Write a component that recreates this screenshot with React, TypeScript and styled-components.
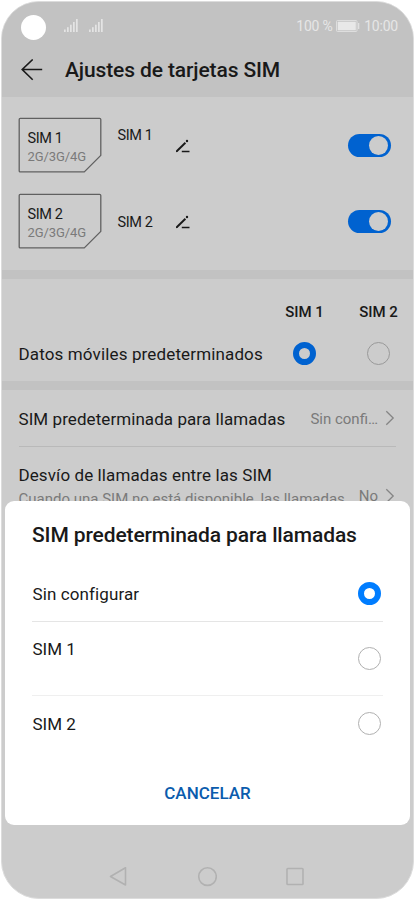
import React from "react";
import styled, { createGlobalStyle } from "styled-components";

const GlobalStyle = createGlobalStyle`
  * { box-sizing: border-box; }
  body { margin: 0; background: #fff; font-family: Roboto, "Liberation Sans", sans-serif; }
  svg { display: block; flex: none; }
`;

const Phone = styled.div`
  position: relative;
  width: 413px;
  height: 898px;
  margin: 1px 1px 0;
  border: 1px solid #dcdcdc;
  border-radius: 38px;
  background: #ccc;
  overflow: hidden;
  color: #191919;
  display: flex;
  flex-direction: column;
`;

const Top = styled.header`
  height: 95px;
  flex: none;
  background: #c2c2c2;
`;

const StatusBar = styled.div`
  height: 48px;
  padding: 0 15px 0 18.5px;
  display: flex;
  align-items: center;
  color: #e6e6e6;
`;

const Camera = styled.div`
  width: 25px;
  height: 25px;
  margin: 2px 18px 0 0;
  border-radius: 50%;
  background: #fff;
`;

const Signals = styled.div`
  display: flex;
  gap: 11px;
  flex: 1;
  padding-bottom: 2px;
`;

const BatteryStatus = styled.div`
  display: flex;
  align-items: center;
  gap: 4px;
  margin-right: 3.5px;
  & > svg { margin-left: -1px; margin-right: 1px; }
`;

const Label = styled.span<{ $size: number; $weight?: number; $muted?: boolean; $spacing?: number }>`
  font-size: ${(p) => p.$size}px;
  font-weight: ${(p) => p.$weight ?? 400};
  letter-spacing: ${(p) => p.$spacing ?? 0}px;
  line-height: 20px;
  white-space: nowrap;
  ${(p) => p.$muted && "color: #7a7a7a;"}
`;

const TitleBar = styled.div`
  height: 40px;
  padding-left: 19px;
  display: flex;
  align-items: center;
  gap: 22px;
`;

const SimList = styled.section`
  height: 173px;
  flex: none;
  padding: 20px 22.5px 0 16px;
  display: flex;
  flex-direction: column;
`;

const SimRow = styled.div`
  height: 76px;
  display: flex;
  align-items: flex-start;
`;

const SimCard = styled.div`
  display: grid;
  width: 84px;
  height: 56px;
  & > * { grid-area: 1 / 1; }
`;

const CardText = styled.div`
  padding: 13px 0 0 9.5px;
  display: flex;
  flex-direction: column;
  & > span { line-height: 18px; }
`;

const SimName = styled.div<{ $offset: number }>`
  width: 57px;
  margin: ${(p) => p.$offset}px 0 0 15.5px;
  line-height: 0;
`;

const PencilSlot = styled.div`
  padding-top: 22px;
  flex: 1;
`;

const Toggle = styled.div`
  width: 42.5px;
  height: 23.5px;
  margin-top: 16.5px;
  padding: 2px 2.5px 2px 2px;
  border-radius: 12px;
  background: #0062d0;
  display: flex;
  justify-content: flex-end;
  align-items: center;
  &::after {
    content: "";
    width: 19px;
    height: 19px;
    border-radius: 50%;
    background: #ccc;
  }
`;

const Band = styled.div`
  height: 9px;
  flex: none;
  background: #c2c2c2;
`;

const DataSection = styled.section`
  height: 102px;
  flex: none;
  padding: 23px 0 0 16.5px;
  display: grid;
  grid-template-columns: 249px 74px 74px;
  grid-template-rows: 20px 62px;
  align-items: center;
  justify-items: center;
`;

const DataLabel = styled.div`
  justify-self: start;
  padding-top: 2px;
`;

const Radio = styled.div<{ $checked?: boolean; $dim?: boolean }>`
  width: 23px;
  height: 23px;
  flex: none;
  border-radius: 50%;
  border: ${(p) =>
    p.$checked ? `6px solid ${p.$dim ? "#0062d0" : "#007dff"}` : `1px solid ${p.$dim ? "#999" : "#b0b0b0"}`};
`;

const Preference = styled.div`
  height: 57px;
  flex: none;
  margin: 0 17px 0 16.5px;
  padding-top: 1px;
  display: flex;
  align-items: center;
  border-bottom: 1px solid #b9b9b9;
`;

const PreferenceBlock = styled.div`
  height: 100px;
  flex: none;
  margin: 0 17px 0 16.5px;
  padding-top: 18px;
  display: flex;
  align-items: flex-start;
`;

const Stack = styled.div`
  display: flex;
  flex-direction: column;
  gap: 4px;
  flex: 1;
`;

const Grow = styled.div`
  flex: 1;
  display: flex;
`;

const Value = styled.div<{ $drop?: number }>`
  display: flex;
  align-items: center;
  gap: 7px;
  padding: ${(p) => p.$drop ?? 0}px 1px 0 0;
  & > svg { margin-bottom: 1px; }
`;

const Dialog = styled.div`
  position: absolute;
  left: 2.5px;
  right: 3px;
  top: 499px;
  height: 324px;
  padding: 24px 27px 0 27.5px;
  border-radius: 9px;
  background: #fff;
  display: flex;
  flex-direction: column;
`;

const DialogTitle = styled.h2`
  margin: 0;
  height: 43px;
  display: flex;
  align-items: flex-start;
`;

const Option = styled.div<{ $height: number; $line?: string }>`
  height: ${(p) => p.$height}px;
  padding: 0 2.5px 0 0.5px;
  display: flex;
  align-items: flex-start;
  justify-content: space-between;
  border-bottom: 1px solid ${(p) => p.$line ?? "transparent"};
`;

const Drop = styled.div<{ $top: number }>`
  padding-top: ${(p) => p.$top}px;
  display: flex;
`;

const CancelButton = styled.button`
  margin: 21px auto 0;
  padding: 0;
  border: 0;
  background: none;
  color: #0b5cad;
  font-family: inherit;
  height: 20px;
`;

const NavBar = styled.nav`
  margin-top: auto;
  height: 31px;
  flex: none;
  padding: 0 109px 0 107px;
  display: flex;
  justify-content: space-between;
`;

const Signal = () => (
  <svg width="14" height="13" viewBox="0 0 14 13" fill="#e4e4e4">
    <rect x="0" y="10.5" width="1.7" height="2.5" />
    <rect x="3" y="8.2" width="1.7" height="4.8" />
    <rect x="6" y="5.7" width="1.7" height="7.3" />
    <rect x="9" y="3" width="1.7" height="10" />
    <rect x="12" y="0" width="1.7" height="13" />
  </svg>
);

const Battery = () => (
  <svg width="24" height="12" viewBox="0 0 24 12">
    <rect x="0.5" y="0.5" width="20.5" height="11" rx="1" fill="none" stroke="#dedede" />
    <rect x="1.7" y="1.7" width="18.1" height="8.6" fill="#e8e8e8" />
    <rect x="22" y="3" width="1.3" height="6" fill="#e0e0e0" />
  </svg>
);

const BackArrow = () => (
  <svg width="22" height="22" viewBox="0 0 22 22" fill="none" stroke="#191919" strokeWidth="1.6">
    <path d="M11.7 .5 1.2 10.5 11.7 20.7M1.2 10.5H21.2" />
  </svg>
);

const CardOutline = () => (
  <svg width="84" height="56" viewBox="0 0 84 56" fill="none" stroke="#606060" strokeWidth="1.3" strokeLinejoin="round">
    <path d="M2.2 1.4H81.6Q82.8 1.4 82.8 2.6V38.4L66.3 54.9H2.2Q1.2 54.9 1.2 53.9V2.4Q1.2 1.4 2.2 1.4Z" />
  </svg>
);

const Pencil = () => (
  <svg width="16" height="14" viewBox="0 0 16 14" fill="none" stroke="#191919">
    <path d="M1.7 12.3 10.4 3.7" strokeWidth="1.9" />
    <path d="M.9 13.2 1.3 11.3 2.8 12.8Z" fill="#191919" stroke="none" />
    <circle cx="12" cy="2" r="1.2" fill="#191919" stroke="none" />
    <path d="M6.8 12.5H14.5" strokeWidth="1.3" />
  </svg>
);

const Chevron = () => (
  <svg width="10" height="16" viewBox="0 0 10 16" fill="none" stroke="#858585" strokeWidth="1.3">
    <path d="M1.3 1.2 8.2 8 1.3 14.8" />
  </svg>
);

const SimEntry = ({ name, offset }: { name: string; offset: number }) => (
  <SimRow>
    <SimCard>
      <CardOutline />
      <CardText>
        <Label $size={14.5} $spacing={-0.4}>{name}</Label>
        <Label $size={13} $spacing={-0.1} $muted>2G/3G/4G</Label>
      </CardText>
    </SimCard>
    <SimName $offset={offset}><Label $size={14.5} $spacing={-0.4}>{name}</Label></SimName>
    <PencilSlot><Pencil /></PencilSlot>
    <Toggle />
  </SimRow>
);

export default function App() {
  return (
    <>
      <GlobalStyle />
      <Phone>
        <Top>
          <StatusBar>
            <Camera />
            <Signals><Signal /><Signal /></Signals>
            <BatteryStatus>
              <Label $size={14} $spacing={-0.2}>100 %</Label>
              <Battery />
            </BatteryStatus>
            <Label $size={14} $spacing={-0.2}>10:00</Label>
          </StatusBar>
          <TitleBar>
            <BackArrow />
            <Label $size={21} $weight={500} $spacing={-0.12}>Ajustes de tarjetas SIM</Label>
          </TitleBar>
        </Top>
        <SimList>
          <SimEntry name="SIM 1" offset={9} />
          <SimEntry name="SIM 2" offset={20} />
        </SimList>
        <Band />
        <DataSection>
          <span />
          <Label $size={15} $weight={500}>SIM 1</Label>
          <Label $size={15} $weight={500}>SIM 2</Label>
          <DataLabel><Label $size={17} $spacing={0.14}>Datos móviles predeterminados</Label></DataLabel>
          <Radio $checked $dim />
          <Radio $dim />
        </DataSection>
        <Band />
        <Preference>
          <Grow><Label $size={17} $spacing={0.07}>SIM predeterminada para llamadas</Label></Grow>
          <Value><Label $size={15} $muted>Sin confi…</Label><Chevron /></Value>
        </Preference>
        <PreferenceBlock>
          <Stack>
            <Label $size={17} $spacing={0.1}>Desvío de llamadas entre las SIM</Label>
            <Label $size={15} $muted>Cuando una SIM no está disponible, las llamadas</Label>
          </Stack>
          <Value $drop={21}><Label $size={15} $muted>No</Label><Chevron /></Value>
        </PreferenceBlock>
        <NavBar>
          <svg width="18" height="20" viewBox="0 0 18 20" fill="none" stroke="#b1b1b1" strokeWidth="1.6" strokeLinejoin="round">
            <path d="M16.5 .7V18L1.5 9.5Z" />
          </svg>
          <svg width="20" height="20" viewBox="0 0 20 20" fill="none" stroke="#b1b1b1" strokeWidth="1.6">
            <circle cx="10.5" cy="9.6" r="8.8" />
          </svg>
          <svg width="18" height="20" viewBox="0 0 18 20" fill="none" stroke="#b1b1b1" strokeWidth="1.6">
            <rect x="1" y="1.5" width="16" height="16" rx="0.8" />
          </svg>
        </NavBar>
        <Dialog role="dialog">
          <DialogTitle><Label $size={21} $weight={500} $spacing={-0.12}>SIM predeterminada para llamadas</Label></DialogTitle>
          <Option $height={54} $line="#e5e5e5">
            <Drop $top={16}><Label $size={17} $spacing={0.1}>Sin configurar</Label></Drop>
            <Drop $top={14}><Radio $checked /></Drop>
          </Option>
          <Option $height={74} $line="#efefef">
            <Drop $top={17}><Label $size={17}>SIM 1</Label></Drop>
            <Drop $top={25}><Radio /></Drop>
          </Option>
          <Option $height={66}>
            <Drop $top={18}><Label $size={17}>SIM 2</Label></Drop>
            <Drop $top={16}><Radio /></Drop>
          </Option>
          <CancelButton><Label $size={17} $weight={500}>CANCELAR</Label></CancelButton>
        </Dialog>
      </Phone>
    </>
  );
}
